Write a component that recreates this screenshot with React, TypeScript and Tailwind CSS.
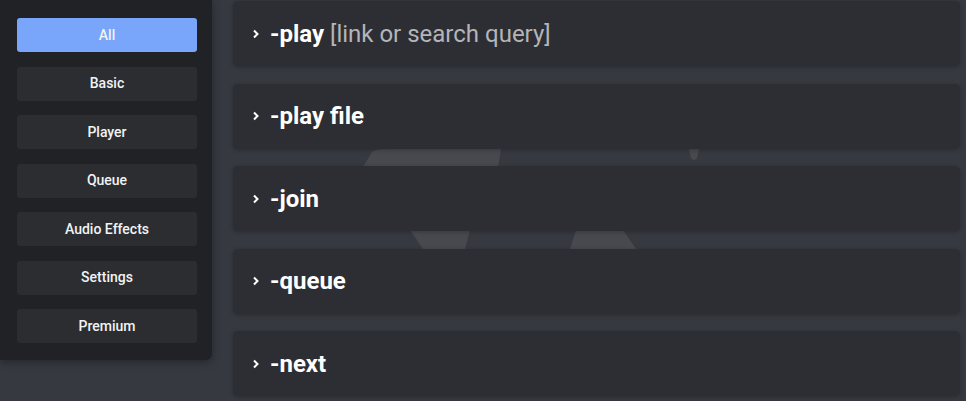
import { useState } from 'react';

const categories = ['All', 'Basic', 'Player', 'Queue', 'Audio Effects', 'Settings', 'Premium'];

const commands = [
  { name: '-play', args: '[link or search query]' },
  { name: '-play file' },
  { name: '-join' },
  { name: '-queue' },
  { name: '-next' },
];

function Chevron() {
  return (
    <svg width="8" height="10" viewBox="0 0 8 10" className="shrink-0">
      <path d="M2 1.5 L5.5 5 L2 8.5" fill="none" stroke="#ffffff" strokeWidth="2" />
    </svg>
  );
}

export default function App() {
  const [active, setActive] = useState('All');

  return (
    <div
      className="relative w-[966px] h-[401px] overflow-hidden bg-[#363940] flex"
      style={{ fontFamily: 'Roboto, "Liberation Sans", sans-serif' }}
    >
      {/* faint logo behind the list */}
      <svg className="absolute left-0 top-0" width="966" height="401" viewBox="0 0 966 401">
        <path d="M363 167 L372 152 Q376 149 386 149 L501 149 L498 167 Z" fill="#48494f" />
        <path d="M689 149 L699 149 L697 158 Q694 162 691 158 Z" fill="#48494f" />
        <path d="M410 230 L470 230 L465 249 L423 249 Z" fill="#48494f" />
        <path d="M576 230 L623 230 L636 249 L570 249 Z" fill="#48494f" />
      </svg>

      {/* sidebar */}
      <div className="relative w-[212px] h-[360px] shrink-0 bg-[#202225] rounded-br-md shadow-[0_2px_8px_rgba(0,0,0,0.35)] px-[17px] pt-[18px] flex flex-col gap-[14.5px]">
        {categories.map((c) => (
          <button
            key={c}
            onClick={() => setActive(c)}
            className={`h-[34px] w-[180px] rounded-[3px] text-[14px] font-medium text-[#f2f3f5] ${
              active === c ? 'bg-[#79a5fb]' : 'bg-[#2b2d31]'
            }`}
          >
            {c}
          </button>
        ))}
      </div>

      {/* command list */}
      <div className="relative flex-1 pl-[21px] pr-[6px] pt-[1px] flex flex-col gap-[17.5px]">
        {commands.map((cmd) => (
          <div
            key={cmd.name}
            className="h-[65px] shrink-0 rounded-[5px] bg-[#2c2e33] shadow-[0_1px_4px_rgba(0,0,0,0.25)] flex items-center pl-[19px] gap-[10px]"
          >
            <Chevron />
            <div className="text-[24px] leading-none text-white">
              <span className="font-bold">{cmd.name}</span>
              {cmd.args && <span className="text-[#b4b5b9] font-normal"> {cmd.args}</span>}
            </div>
          </div>
        ))}
      </div>
    </div>
  );
}
